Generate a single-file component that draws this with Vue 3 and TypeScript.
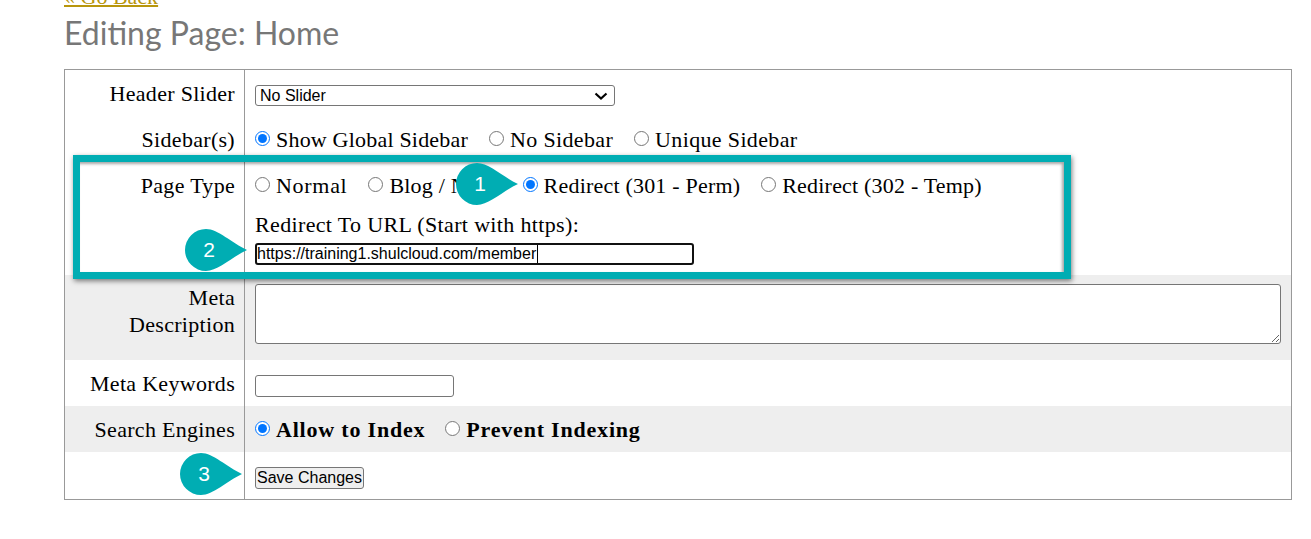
<script setup lang="ts">
interface Opt { text: string; checked?: boolean }
const sidebarOpts: Opt[] = [
  { text: 'Show Global Sidebar', checked: true },
  { text: 'No Sidebar' },
  { text: 'Unique Sidebar' },
]
const typeOpts: Opt[] = [
  { text: 'Normal' },
  { text: 'Blog / News' },
  { text: 'Redirect (301 - Perm)', checked: true },
  { text: 'Redirect (302 - Temp)' },
]
const indexOpts: Opt[] = [
  { text: 'Allow to Index', checked: true },
  { text: 'Prevent Indexing' },
]
</script>

<template>
  <main class="page">
    <a class="back" href="#">« Go Back</a>
    <h1 class="title">Editing Page: Home</h1>

    <form class="table" @submit.prevent>
      <div class="row r-slider">
        <div class="label">Header Slider</div>
        <div class="cell">
          <div class="select-wrap">
            <select class="select"><option>No Slider</option></select>
            <svg class="chev" width="14" height="8" viewBox="0 0 14 8"><path d="M1.5 1.5L7 6.5L12.5 1.5" /></svg>
          </div>
        </div>
      </div>

      <div class="row r-plain up">
        <div class="label">Sidebar(s)</div>
        <div class="cell radios sidebar-radios">
          <label v-for="o in sidebarOpts" :key="o.text" class="radio">
            <input type="radio" name="sidebar" :checked="o.checked" />{{ o.text }}
          </label>
        </div>
      </div>

      <div class="row r-type up">
        <div class="label">Page Type</div>
        <div class="cell">
          <div class="radios type-radios">
            <label v-for="o in typeOpts" :key="o.text" class="radio">
              <input type="radio" name="ptype" :checked="o.checked" />{{ o.text }}
            </label>
          </div>
          <div class="url-label">Redirect To URL (Start with https):</div>
          <div class="url-wrap">
            <input class="url" type="text" value="https://training1.shulcloud.com/member" />
            <span class="caret"></span>
          </div>
        </div>
      </div>

      <div class="row r-meta shade up">
        <div class="label">Meta<br />Description</div>
        <div class="cell"><textarea class="area"></textarea></div>
      </div>

      <div class="row r-plain">
        <div class="label">Meta Keywords</div>
        <div class="cell"><input class="keywords" type="text" /></div>
      </div>

      <div class="row r-plain shade">
        <div class="label">Search Engines</div>
        <div class="cell radios bold">
          <label v-for="o in indexOpts" :key="o.text" class="radio">
            <input type="radio" name="index" :checked="o.checked" />{{ o.text }}
          </label>
        </div>
      </div>

      <div class="row r-save">
        <div class="label"></div>
        <div class="cell"><button class="save" type="button">Save Changes</button></div>
      </div>
    </form>

    <div class="highlight"></div>

    <div class="pin pin1">
      <svg width="63" height="42" viewBox="0 0 63 42"><path d="M21 0C33 0 47 14 62 21C47 28 33 42 21 42A21 21 0 0 1 21 0Z" /></svg>
      <span>1</span>
    </div>
    <div class="pin pin2">
      <svg width="63" height="42" viewBox="0 0 63 42"><path d="M21 0C33 0 47 14 62 21C47 28 33 42 21 42A21 21 0 0 1 21 0Z" /></svg>
      <span>2</span>
    </div>
    <div class="pin pin3">
      <svg width="63" height="42" viewBox="0 0 63 42"><path d="M21 0C33 0 47 14 62 21C47 28 33 42 21 42A21 21 0 0 1 21 0Z" /></svg>
      <span>3</span>
    </div>
  </main>
</template>

<style>
html, body { margin: 0; background: #fff; }
</style>

<style scoped>
.page {
  position: relative;
  height: 539px;
  overflow: hidden;
  padding: 0 19px 0 64px;
  box-sizing: border-box;
  font-family: "Liberation Serif", serif;
  color: #000;
}
.back {
  display: block;
  width: max-content;
  margin-top: -13px;
  height: 19px;
  line-height: 19px;
  font-size: 22px;
  color: #b8960c;
  text-decoration: underline;
  text-decoration-thickness: 2px;
}
.title {
  margin: 4px 0 0;
  height: 59px;
  font: 400 32px/46px Lato, sans-serif;
  color: #777;
}
.table {
  border: 1px solid #999;
  width: 1228px;
  box-sizing: border-box;
}
.row {
  display: grid;
  grid-template-columns: 180px 1fr;
  font-size: 22px;
  letter-spacing: 0.2px;
}
.r-slider { height: 47px; }
.r-plain { height: 46px; }
.r-type { height: 112px; }
.r-meta { height: 85px; }
.r-save { height: 47px; }
.shade { background: #eee; }
.label {
  border-right: 1px solid #999;
  text-align: right;
  padding: 10px 9px 0 0;
  line-height: 27px;
  letter-spacing: 0.3px;
}
.up .label { padding-top: 9px; }
.cell {
  padding: 0 0 0 10px;
}
.radios {
  display: flex;
  gap: 21px;
  padding-top: 10px;
  line-height: 27px;
  height: 27px;
}
.up .radios { padding-top: 9px; }
.radio {
  display: inline-flex;
  align-items: center;
  white-space: nowrap;
}
.radio input {
  width: 15px;
  height: 15px;
  margin: 0 6px 2px 0;
}
.sidebar-radios .radio:nth-child(n + 2) { letter-spacing: 0.35px; }
.type-radios .radio:first-child { letter-spacing: 0.7px; }
.type-radios .radio:last-child { letter-spacing: 0.2px; }
.bold { font-weight: 700; letter-spacing: 0.8px; gap: 20px; }
.select-wrap {
  position: relative;
  width: 360px;
  margin-top: 15px;
}
.select {
  display: block;
  width: 100%;
  height: 21px;
  appearance: none;
  font: 16px "Liberation Sans", sans-serif;
  border: 1px solid #767676;
  border-radius: 3px;
  background: #fff;
  padding: 0 0 0 4px;
}
.chev {
  position: absolute;
  right: 7px;
  top: 7px;
  pointer-events: none;
}
.chev path { fill: none; stroke: #000; stroke-width: 2.2; }
.url-label {
  margin-top: 12px;
  line-height: 27px;
  height: 27px;
  letter-spacing: 0.35px;
}
.url-wrap {
  position: relative;
  width: 439px;
  margin-top: 5px;
}
.url {
  display: block;
  width: 100%;
  height: 22px;
  box-sizing: border-box;
  border: 2px solid #111;
  border-radius: 3px;
  padding: 0;
  font: 16px "Liberation Sans", sans-serif;
  letter-spacing: 0;
  outline: none;
}
.caret {
  position: absolute;
  left: 282px;
  top: 2px;
  width: 1px;
  height: 18px;
  background: #000;
}
.area {
  display: block;
  box-sizing: border-box;
  width: 1026px;
  height: 60px;
  margin-top: 9px;
  border: 1px solid #767676;
  border-radius: 3px;
  background: #fff;
}
.keywords {
  display: block;
  box-sizing: border-box;
  width: 199px;
  height: 22px;
  margin-top: 15px;
  border: 1px solid #767676;
  border-radius: 3px;
}
.save {
  display: block;
  box-sizing: border-box;
  width: 109px;
  height: 22px;
  margin-top: 15px;
  padding: 0;
  font: 16px "Liberation Sans", sans-serif;
  letter-spacing: 0;
  color: #000;
  background: #efefef;
  border: 1px solid #767676;
  border-radius: 3px;
}
.highlight {
  position: absolute;
  left: 73px;
  top: 155px;
  width: 998px;
  height: 124px;
  box-sizing: border-box;
  border: 7px solid #00adb3;
  box-shadow: 1px 2px 5px rgba(0, 0, 0, 0.5), inset -2px 2px 3px rgba(0, 0, 0, 0.35);
  pointer-events: none;
}
.pin {
  position: absolute;
  width: 63px;
  height: 42px;
}
.pin svg { display: block; }
.pin path { fill: #00adb3; }
.pin span {
  position: absolute;
  left: 0;
  top: 0;
  width: 48px;
  text-align: center;
  font: 21px/42px "Liberation Sans", sans-serif;
  color: #fff;
}
.pin1 { left: 456px; top: 163px; }
.pin2 { left: 185px; top: 229px; }
.pin3 { left: 180px; top: 453px; }
</style>
